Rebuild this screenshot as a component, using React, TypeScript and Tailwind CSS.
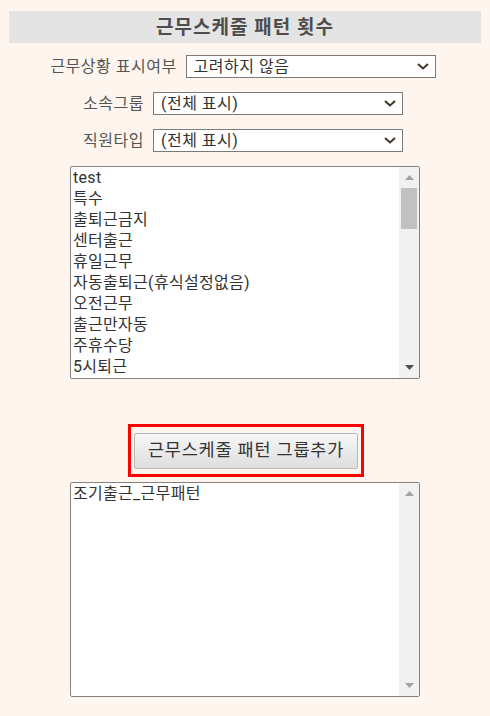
const FONT = "font-['Roboto','Noto_Sans_CJK_KR',sans-serif]";

const groups = [
  "test",
  "특수",
  "출퇴근금지",
  "센터출근",
  "휴일근무",
  "자동출퇴근(휴식설정없음)",
  "오전근무",
  "출근만자동",
  "주휴수당",
  "5시퇴근",
];

function Chevron() {
  return (
    <svg width="12" height="7" viewBox="0 0 12 7" className="shrink-0">
      <path d="M1 1 L6 5.5 L11 1" fill="none" stroke="#3d3428" strokeWidth="2" />
    </svg>
  );
}

function FakeSelect({ value }: { value: string }) {
  return (
    <div className="flex h-[23px] w-[250px] items-center justify-between border border-[#7a7a7a] bg-white pl-[7px] pr-[6px]">
      <span className="text-[16px] leading-none tracking-[0.5px] text-[#333]">{value}</span>
      <Chevron />
    </div>
  );
}

function Row({ label, value }: { label: string; value: string }) {
  return (
    <div className="flex items-center justify-center gap-[9px] pr-[4px]">
      <span className="text-[16px] leading-none tracking-[0.5px] text-[#555]">{label}</span>
      <FakeSelect value={value} />
    </div>
  );
}

function Arrow({ up, color }: { up?: boolean; color: string }) {
  return (
    <svg width="9" height="5" viewBox="0 0 9 5">
      <path d={up ? "M0 5 L4.5 0 L9 5 Z" : "M0 0 L4.5 5 L9 0 Z"} fill={color} />
    </svg>
  );
}

function ListBox({
  items,
  height,
  thumb,
}: {
  items: string[];
  height: string;
  thumb: boolean;
}) {
  return (
    <div className={`flex w-[350px] rounded-[2px] border border-[#828282] bg-white ${height}`}>
      <ul className="flex-1 pl-[2px]">
        {items.map((it) => (
          <li key={it} className="h-[21px] text-[16px] leading-[21px] tracking-[0.3px] text-[#333]">
            {it}
          </li>
        ))}
      </ul>
      <div className="flex w-[20px] flex-col items-center bg-[#f1f1f1]">
        <div className="flex h-[20px] items-center justify-center pt-[1px]">
          <Arrow up color="#a3a3a3" />
        </div>
        <div className="flex-1 self-stretch px-[2px]">
          {thumb && <div className="mt-[1px] h-[41px] bg-[#c1c1c1]" />}
        </div>
        <div className="flex h-[20px] items-center justify-center pb-[1px]">
          <Arrow color={thumb ? "#505050" : "#a3a3a3"} />
        </div>
      </div>
    </div>
  );
}

export default function App() {
  return (
    <div className={`min-h-[716px] bg-[#fef5ef] pt-[11px] ${FONT}`}>
      <div className="mx-[9px] flex h-[32px] items-center justify-center bg-[#e4e4e4]">
        <h1 className="text-[19px] font-bold leading-none tracking-[1px] text-[#4d4d4d]">근무스케줄 패턴 횟수</h1>
      </div>

      <div className="mt-[12px] flex flex-col gap-[14px]">
        <Row label="근무상황 표시여부" value="고려하지 않음" />
        <Row label="소속그룹" value="(전체 표시)" />
        <Row label="직원타입" value="(전체 표시)" />
      </div>

      <div className="mt-[14px] flex justify-center">
        <ListBox items={groups} height="h-[213px]" thumb />
      </div>

      <div className="mt-[45px] flex justify-center pl-[2px]">
        <div className="border-[3px] border-[#ff0000] px-[3px] pb-[5px] pt-[6px]">
          <button className="h-[36px] w-[224px] rounded-[2px] border border-[#b9b9b9] bg-gradient-to-b from-[#f7f7f7] to-[#dedede] text-[17.5px] leading-none tracking-[0.8px] text-[#333]">
            근무스케줄 패턴 그룹추가
          </button>
        </div>
      </div>

      <div className="mt-[5px] flex justify-center">
        <ListBox items={["조기출근_근무패턴"]} height="h-[215px]" thumb={false} />
      </div>
    </div>
  );
}
